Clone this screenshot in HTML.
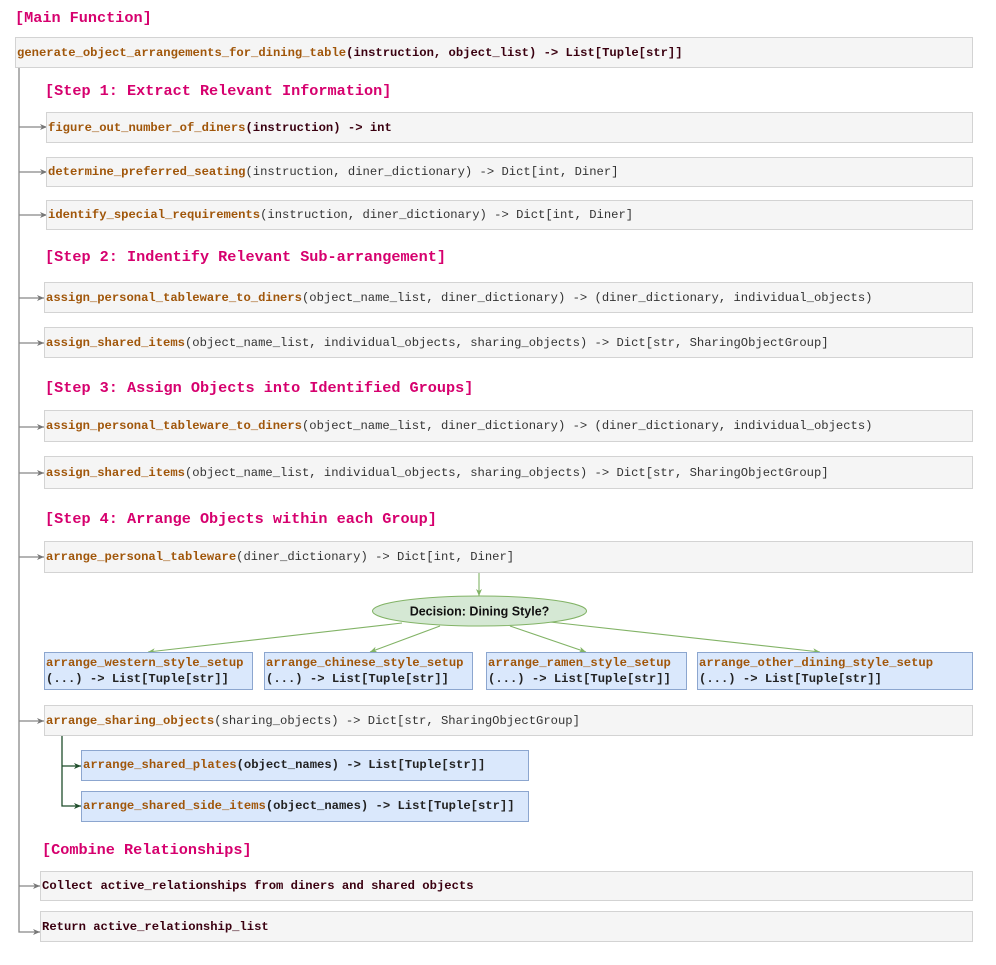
<!DOCTYPE html>
<html><head><meta charset="utf-8"><style>
body{margin:0;width:996px;height:965px;background:#fff;position:relative;overflow:hidden;font-family:"Liberation Mono",monospace;}
.h{position:absolute;color:#d6006e;font-weight:bold;font-size:15.2px;white-space:nowrap;line-height:18px}
.b{position:absolute;background:#f5f5f5;border:1px solid #d3d3d3;box-sizing:border-box;font-size:12.2px;white-space:nowrap;display:flex;align-items:center;padding-left:1px;color:#333}
.bl{position:absolute;background:#dae8fc;border:1px solid #8ca6cf;box-sizing:border-box;font-size:12.2px;white-space:nowrap;padding-left:1px;color:#222;font-weight:bold}
.f{color:#a0560a;font-weight:bold}
.d{color:#3a0010;font-weight:bold}
svg{position:absolute;left:0;top:0}
</style></head><body>
<svg width="996" height="965">
<defs>
<marker id="g" markerWidth="8" markerHeight="8" refX="7" refY="4" orient="auto" markerUnits="userSpaceOnUse"><path d="M0,1 L7,4 L0,7 L2,4z" fill="#777"/></marker>
<marker id="gr" markerWidth="8" markerHeight="8" refX="7" refY="4" orient="auto" markerUnits="userSpaceOnUse"><path d="M0,1 L7,4 L0,7 L2,4z" fill="#82b366"/></marker>
<marker id="dg" markerWidth="8" markerHeight="8" refX="7" refY="4" orient="auto" markerUnits="userSpaceOnUse"><path d="M0,1 L7,4 L0,7 L2,4z" fill="#1f4d2b"/></marker>
</defs>
<g stroke="#888" stroke-width="1.3" fill="none">
<path d="M19,68 V932 H40" marker-end="url(#g)"/>
<path d="M19,127 H47" marker-end="url(#g)"/>
<path d="M19,172 H47" marker-end="url(#g)"/>
<path d="M19,215 H47" marker-end="url(#g)"/>
<path d="M19,298 H44" marker-end="url(#g)"/>
<path d="M19,343 H44" marker-end="url(#g)"/>
<path d="M19,427 H44" marker-end="url(#g)"/>
<path d="M19,473 H44" marker-end="url(#g)"/>
<path d="M19,557 H44" marker-end="url(#g)"/>
<path d="M19,721 H44" marker-end="url(#g)"/>
<path d="M19,886 H40" marker-end="url(#g)"/>
</g>
<g stroke="#1f4d2b" stroke-width="1.3" fill="none">
<path d="M62,736 V806 H81" marker-end="url(#dg)"/>
<path d="M62,766 H81" marker-end="url(#dg)"/>
</g>
<g stroke="#82b366" stroke-width="1.1" fill="none">
<path d="M479,573 V596" marker-end="url(#gr)"/>
<path d="M402,623 L148,652" marker-end="url(#gr)"/>
<path d="M440,626 L370,652" marker-end="url(#gr)"/>
<path d="M510,626 L586,652" marker-end="url(#gr)"/>
<path d="M550,622 L820,652" marker-end="url(#gr)"/>
</g>
<ellipse cx="479.5" cy="611" rx="107" ry="15" fill="#d5e8d4" stroke="#82b366" stroke-width="1"/>
<text x="479.5" y="615.5" text-anchor="middle" font-family="Liberation Sans, sans-serif" font-weight="bold" font-size="12.5" fill="#111">Decision: Dining Style?</text>
</svg>

<div class="h" style="left:15px;top:9px">[Main Function]</div>
<div class="b" style="left:15px;top:37px;width:958px;height:31px"><span class="f">generate_object_arrangements_for_dining_table</span><span class="d">(instruction, object_list) -&gt; List[Tuple[str]]</span></div>

<div class="h" style="left:45px;top:82px">[Step 1: Extract Relevant Information]</div>
<div class="b" style="left:46px;top:112px;width:927px;height:31px"><span class="f">figure_out_number_of_diners</span><span class="d">(instruction) -&gt; int</span></div>
<div class="b" style="left:46px;top:157px;width:927px;height:30px"><span class="f">determine_preferred_seating</span>(instruction, diner_dictionary) -&gt; Dict[int, Diner]</div>
<div class="b" style="left:46px;top:200px;width:927px;height:30px"><span class="f">identify_special_requirements</span>(instruction, diner_dictionary) -&gt; Dict[int, Diner]</div>

<div class="h" style="left:45px;top:248px">[Step 2: Indentify Relevant Sub-arrangement]</div>
<div class="b" style="left:44px;top:282px;width:929px;height:31px"><span class="f">assign_personal_tableware_to_diners</span>(object_name_list, diner_dictionary) -&gt; (diner_dictionary, individual_objects)</div>
<div class="b" style="left:44px;top:327px;width:929px;height:31px"><span class="f">assign_shared_items</span>(object_name_list, individual_objects, sharing_objects) -&gt; Dict[str, SharingObjectGroup]</div>

<div class="h" style="left:45px;top:379px">[Step 3: Assign Objects into Identified Groups]</div>
<div class="b" style="left:44px;top:410px;width:929px;height:32px"><span class="f">assign_personal_tableware_to_diners</span>(object_name_list, diner_dictionary) -&gt; (diner_dictionary, individual_objects)</div>
<div class="b" style="left:44px;top:456px;width:929px;height:33px"><span class="f">assign_shared_items</span>(object_name_list, individual_objects, sharing_objects) -&gt; Dict[str, SharingObjectGroup]</div>

<div class="h" style="left:45px;top:510px">[Step 4: Arrange Objects within each Group]</div>
<div class="b" style="left:44px;top:541px;width:929px;height:32px"><span class="f">arrange_personal_tableware</span>(diner_dictionary) -&gt; Dict[int, Diner]</div>

<div class="bl" style="left:44px;top:652px;width:209px;height:38px;padding-top:3px;line-height:15.5px"><span class="f">arrange_western_style_setup</span><br>(...) -&gt; List[Tuple[str]]</div>
<div class="bl" style="left:264px;top:652px;width:209px;height:38px;padding-top:3px;line-height:15.5px"><span class="f">arrange_chinese_style_setup</span><br>(...) -&gt; List[Tuple[str]]</div>
<div class="bl" style="left:486px;top:652px;width:201px;height:38px;padding-top:3px;line-height:15.5px"><span class="f">arrange_ramen_style_setup</span><br>(...) -&gt; List[Tuple[str]]</div>
<div class="bl" style="left:697px;top:652px;width:276px;height:38px;padding-top:3px;line-height:15.5px"><span class="f">arrange_other_dining_style_setup</span><br>(...) -&gt; List[Tuple[str]]</div>

<div class="b" style="left:44px;top:705px;width:929px;height:31px"><span class="f">arrange_sharing_objects</span>(sharing_objects) -&gt; Dict[str, SharingObjectGroup]</div>
<div class="bl" style="left:81px;top:750px;width:448px;height:31px;line-height:29px"><span class="f">arrange_shared_plates</span>(object_names) -&gt; List[Tuple[str]]</div>
<div class="bl" style="left:81px;top:791px;width:448px;height:31px;line-height:29px"><span class="f">arrange_shared_side_items</span>(object_names) -&gt; List[Tuple[str]]</div>

<div class="h" style="left:42px;top:841px">[Combine Relationships]</div>
<div class="b" style="left:40px;top:871px;width:933px;height:30px"><span class="d">Collect active_relationships from diners and shared objects</span></div>
<div class="b" style="left:40px;top:911px;width:933px;height:31px"><span class="d">Return active_relationship_list</span></div>
</body></html>
